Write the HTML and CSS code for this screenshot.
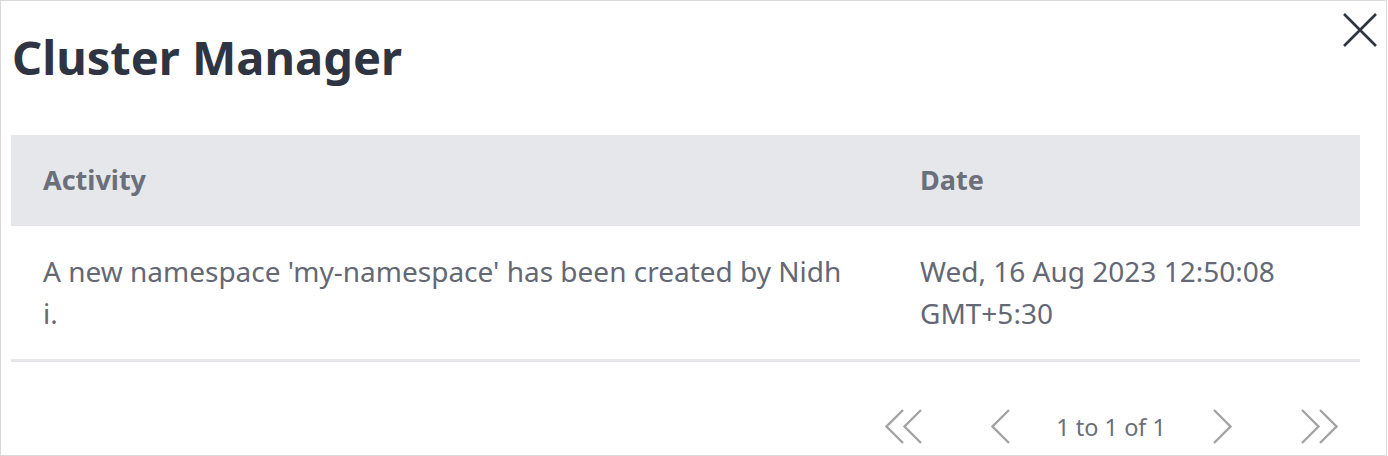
FILE: index.html
```html
<!DOCTYPE html>
<html>
<head>
<meta charset="utf-8">
<link rel="stylesheet" href="styles.css">
</head>
<body>
<div class="dialog">
  <div class="dialog-head">
    <h1 class="title">Cluster Manager</h1>
    <button class="close" aria-label="Close">
      <svg width="34" height="34" viewBox="0 0 34 34"><path d="M1 1L33 33M33 1L1 33" stroke="#2e3442" stroke-width="2.6" fill="none"/></svg>
    </button>
  </div>
  <div class="grid">
    <div class="row head">
      <div class="cell">Activity</div>
      <div class="cell">Date</div>
    </div>
    <div class="row body">
      <div class="cell activity">A new namespace 'my-namespace' has been created by Nidhi.</div>
      <div class="cell date">Wed, 16 Aug 2023 12:50:08 GMT+5:30</div>
    </div>
  </div>
  <div class="pager">
    <span class="pg-btn first"><svg width="37" height="35" viewBox="0 0 37 35"><path d="M18 1L1.5 17.5L18 34M36 1L19.5 17.5L36 34" stroke="#a3a3a3" stroke-width="2.4" fill="none"/></svg></span>
    <span class="pg-btn prev"><svg width="19" height="35" viewBox="0 0 19 35"><path d="M18 1L1.5 17.5L18 34" stroke="#a3a3a3" stroke-width="2.4" fill="none"/></svg></span>
    <span class="pg-text">1 to 1 of 1</span>
    <span class="pg-btn next"><svg width="19" height="35" viewBox="0 0 19 35"><path d="M1 1L17.5 17.5L1 34" stroke="#a3a3a3" stroke-width="2.4" fill="none"/></svg></span>
    <span class="pg-btn last"><svg width="37" height="35" viewBox="0 0 37 35"><path d="M1 1L17.5 17.5L1 34M19 1L35.5 17.5L19 34" stroke="#a3a3a3" stroke-width="2.4" fill="none"/></svg></span>
  </div>
</div>
</body>
</html>
```
FILE: styles.css
```css
html, body {
  margin: 0;
  padding: 0;
  background: #ffffff;
}
body {
  font-family: "Noto Sans", "Open Sans", sans-serif;
}
.dialog {
  box-sizing: border-box;
  width: 1387px;
  height: 456px;
  border: 1px solid #d9d9d9;
  padding: 0 26px 0 10px;
  display: flex;
  flex-direction: column;
}
.dialog-head {
  display: flex;
  justify-content: space-between;
  align-items: flex-start;
  height: 134px;
}
.title {
  margin: 0;
  padding: 25px 0 0 1px;
  font-size: 47px;
  line-height: 62px;
  font-weight: 700;
  color: #2e3442;
}
.close {
  margin: 12px -17px 0 0;
  padding: 0;
  border: 0;
  background: none;
  width: 34px;
  height: 34px;
  display: block;
}
.close svg { display: block; }
.grid {
  display: flex;
  flex-direction: column;
}
.row {
  display: grid;
  grid-template-columns: 877px 1fr;
}
.row.head {
  background: #e6e7ea;
}
.row.head .cell {
  font-size: 27px;
  font-weight: 700;
  line-height: 35px;
  padding: 27px 32px 29px;
  color: #6b6f7a;
}
.row.body {
  border-bottom: 3px solid #e6e7ea;
}
.row.body .cell {
  font-size: 28px;
  line-height: 42px;
  padding: 24px 32px 25px;
  color: #646875;
}
.row.body .cell.activity {
  word-break: break-all;
  padding-right: 44px;
}
.pager {
  display: flex;
  align-items: center;
  justify-content: flex-end;
  margin-top: 47px;
  padding-right: 22px;
}
.pg-btn svg { display: block; }
.pg-btn.first { margin-right: 69px; }
.pg-btn.prev { margin-right: 46px; }
.pg-text {
  font-size: 23.5px;
  line-height: 34px;
  color: #6b6f7a;
  margin-right: 47px;
}
.pg-btn.next { margin-right: 69px; }
```
